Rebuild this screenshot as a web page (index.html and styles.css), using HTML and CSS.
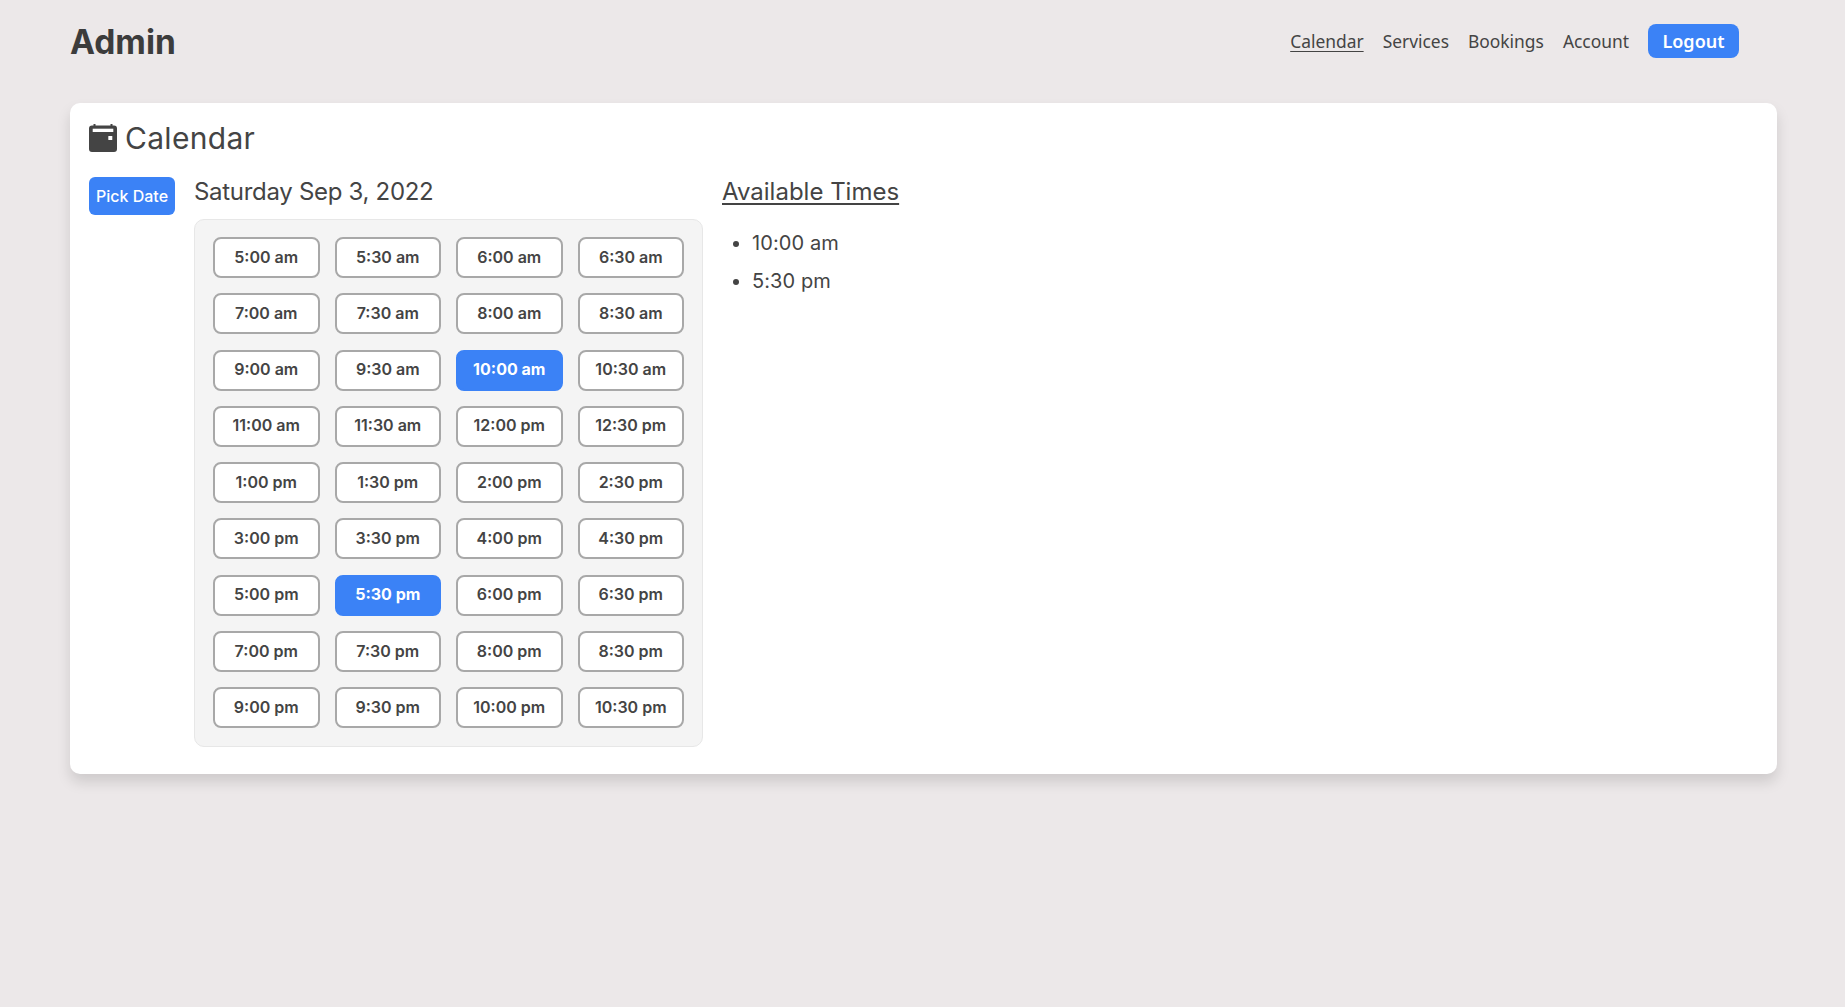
FILE: index.html
```html
<!DOCTYPE html>
<html lang="en">
<head>
    <meta charset="UTF-8">
    <title>Admin</title>
    <link rel="stylesheet" href="styles.css">
</head>
<body>
    <header class="topbar">
        <div class="brand">Admin</div>
        <nav class="nav">
            <a class="nav-link active" href="#">Calendar</a>
            <a class="nav-link" href="#">Services</a>
            <a class="nav-link" href="#">Bookings</a>
            <a class="nav-link" href="#">Account</a>
            <button class="logout">Logout</button>
        </nav>
    </header>

    <main class="card">
        <h1 class="card-title">
            <svg class="title-icon" viewBox="0 0 28 28" aria-hidden="true">
                <path d="M4.5 0h2v1.5h15V0h2v1.5H25a3 3 0 0 1 3 3V25a3 3 0 0 1-3 3H3a3 3 0 0 1-3-3V4.500a3 3 0 0 1 3-3h1.500z"/>
                <rect class="icon-cut" x="3.700" y="4.700" width="20.600" height="3.300"/>
                <rect class="icon-cut" x="19.300" y="12" width="4" height="4" rx="0.500"/>
            </svg>
            Calendar
        </h1>
        <div class="columns">
            <button class="pick-date">Pick Date</button>
            <section class="day">
                <h2 class="day-title">Saturday Sep 3, 2022</h2>
                <div class="slots">
                    <button class="slot">5:00 am</button>
                    <button class="slot">5:30 am</button>
                    <button class="slot">6:00 am</button>
                    <button class="slot">6:30 am</button>
                    <button class="slot">7:00 am</button>
                    <button class="slot">7:30 am</button>
                    <button class="slot">8:00 am</button>
                    <button class="slot">8:30 am</button>
                    <button class="slot">9:00 am</button>
                    <button class="slot">9:30 am</button>
                    <button class="slot selected">10:00 am</button>
                    <button class="slot">10:30 am</button>
                    <button class="slot">11:00 am</button>
                    <button class="slot">11:30 am</button>
                    <button class="slot">12:00 pm</button>
                    <button class="slot">12:30 pm</button>
                    <button class="slot">1:00 pm</button>
                    <button class="slot">1:30 pm</button>
                    <button class="slot">2:00 pm</button>
                    <button class="slot">2:30 pm</button>
                    <button class="slot">3:00 pm</button>
                    <button class="slot">3:30 pm</button>
                    <button class="slot">4:00 pm</button>
                    <button class="slot">4:30 pm</button>
                    <button class="slot">5:00 pm</button>
                    <button class="slot selected">5:30 pm</button>
                    <button class="slot">6:00 pm</button>
                    <button class="slot">6:30 pm</button>
                    <button class="slot">7:00 pm</button>
                    <button class="slot">7:30 pm</button>
                    <button class="slot">8:00 pm</button>
                    <button class="slot">8:30 pm</button>
                    <button class="slot">9:00 pm</button>
                    <button class="slot">9:30 pm</button>
                    <button class="slot">10:00 pm</button>
                    <button class="slot">10:30 pm</button>
                </div>
            </section>
            <section class="available">
                <h2 class="available-title">Available Times</h2>
                <ul class="available-list">
                    <li>10:00 am</li>
                    <li>5:30 pm</li>
                </ul>
            </section>
        </div>
    </main>
</body>
</html>
```

FILE: styles.css
```css
* {
    box-sizing: border-box;
}

body {
    margin: 0;
    height: 100vh;
    overflow: hidden;
    padding: 0 68px 0 70px;
    background-color: #ece8e9;
    color: #444;
    font-family: Inter, "Liberation Sans", sans-serif;
}

.topbar {
    display: flex;
    justify-content: space-between;
    align-items: center;
    height: 103px;
    padding: 0 38px 21px 0;
}

.brand {
    margin-top: 2px;
    font-size: 33.5px;
    font-weight: 700;
    color: #3c3c3c;
}

.nav {
    display: flex;
    align-items: center;
    gap: 19px;
    font-family: "Noto Sans", sans-serif;
    font-size: 17.4px;
}

.nav-link {
    color: #444;
    text-decoration: none;
}

.nav-link.active {
    text-decoration: underline;
    text-underline-offset: 3px;
}

.logout {
    width: 91px;
    height: 34px;
    border: none;
    border-radius: 8px;
    background-color: #3b82f6;
    color: white;
    font-family: "Noto Sans", sans-serif;
    font-size: 18px;
    font-weight: 600;
}

.card {
    height: 671px;
    padding: 18px 19px;
    background-color: white;
    border-radius: 10px;
    box-shadow: 0 8px 14px rgba(0, 0, 0, 0.13);
}

.card-title {
    display: flex;
    align-items: center;
    gap: 8px;
    height: 34px;
    margin: 0 0 22px;
    font-size: 30px;
    font-weight: 400;
    letter-spacing: 0.3px;
}

.title-icon {
    width: 28px;
    height: 28px;
    fill: #444;
}

.icon-cut {
    fill: white;
}

.columns {
    display: flex;
    align-items: flex-start;
}

.pick-date {
    width: 86px;
    height: 38px;
    margin-right: 19px;
    border: none;
    border-radius: 6px;
    background-color: #3b82f6;
    color: white;
    font-family: Inter, sans-serif;
    font-size: 16px;
    font-weight: 500;
    padding: 0;
    white-space: nowrap;
}

.day {
    width: 509px;
}

.day-title,
.available-title {
    height: 30px;
    margin: 0 0 12px;
    font-size: 24px;
    line-height: 30px;
    font-weight: 400;
}

.day-title {
    letter-spacing: -0.3px;
}

.slots {
    display: grid;
    grid-template-columns: repeat(4, 1fr);
    grid-auto-rows: 41px;
    gap: 15.3px 15px;
    padding: 17px 18px 18px;
    background-color: #f4f4f4;
    border: 1px solid #e7e7e7;
    border-radius: 10px;
}

.slot {
    padding: 0 0 2px;
    background-color: white;
    border: 2px solid #a8a8a8;
    border-radius: 8px;
    color: #444;
    font-family: Inter, sans-serif;
    font-size: 16px;
    font-weight: 600;
    white-space: nowrap;
}

.slot.selected {
    background-color: #3b82f6;
    border-color: #3b82f6;
    color: white;
    font-weight: 700;
}

.available {
    margin-left: 19px;
}

.available-title {
    text-decoration: underline;
    text-underline-offset: 3px;
    margin-bottom: 24px;
}

.available-list {
    margin: 0;
    padding-left: 30px;
    font-size: 20px;
    letter-spacing: 0.1px;
}

.available-list li {
    height: 38px;
    line-height: 24px;
}
```
